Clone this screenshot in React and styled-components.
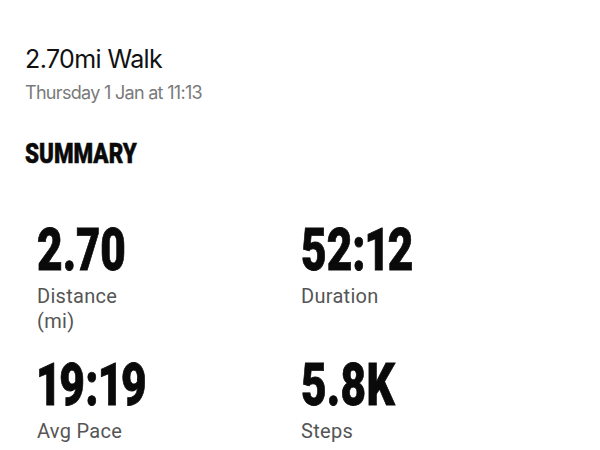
import React from "react";
import styled, { createGlobalStyle } from "styled-components";

const GlobalStyle = createGlobalStyle`
  body {
    margin: 0;
    background: #ffffff;
    font-family: "Inter", "Noto Sans", sans-serif;
  }
`;

const Page = styled.div`
  width: 600px;
  height: 450px;
  overflow: hidden;
  box-sizing: border-box;
  padding: 44px 0 0 25px;
`;

const Title = styled.div`
  font-size: 25px;
  line-height: 30px;
  color: #111;
  letter-spacing: -0.6px;
`;

const Subtitle = styled.div`
  font-size: 18px;
  line-height: 22px;
  color: #7a7a7a;
  letter-spacing: -0.7px;
  margin-top: 8px;
`;

const Condensed = styled.span`
  display: inline-block;
  font-family: "Roboto", "Liberation Sans", sans-serif;
  font-weight: 900;
  font-variant-numeric: proportional-nums;
  color: #0a0a0a;
  -webkit-text-stroke: ${p => p.$stroke || 0.8}px #0a0a0a;
  transform: scaleX(${p => p.$scale || 0.75});
  transform-origin: left center;
  white-space: nowrap;
`;

const SectionTitle = styled.div`
  margin-top: 32px;
  font-size: 28px;
  line-height: 34px;
`;

const Grid = styled.div`
  display: grid;
  grid-template-columns: 264px 264px;
  padding-left: 12px;
  margin-top: 48px;
  row-gap: 20px;
`;

const Stat = styled.div`
  display: flex;
  flex-direction: column;
`;

const Value = styled.div`
  font-size: 59px;
  line-height: 60px;
`;

const Label = styled.div`
  font-family: "Roboto", "Liberation Sans", sans-serif;
  font-size: 20px;
  line-height: 25px;
  color: #555;
  letter-spacing: 0.3px;
  margin-top: ${p => (p.$unit ? 0 : 4)}px;
`;

const stats = [
  { value: "2.70", label: "Distance", unit: "(mi)" },
  { value: "52:12", label: "Duration" },
  { value: "19:19", label: "Avg Pace" },
  { value: "5.8K", label: "Steps" },
];

const App = () => {
  return (
    <Page>
      <GlobalStyle />
      <Title>2.70mi Walk</Title>
      <Subtitle>Thursday 1 Jan at 11:13</Subtitle>
      <SectionTitle>
        <Condensed $scale={0.8} $stroke={0.5}>SUMMARY</Condensed>
      </SectionTitle>
      <Grid>
        {stats.map(s => (
          <Stat key={s.label}>
            <Value>
              <Condensed>{s.value}</Condensed>
            </Value>
            <Label>{s.label}</Label>
            {s.unit ? <Label $unit>{s.unit}</Label> : null}
          </Stat>
        ))}
      </Grid>
    </Page>
  );
};

export default App;
